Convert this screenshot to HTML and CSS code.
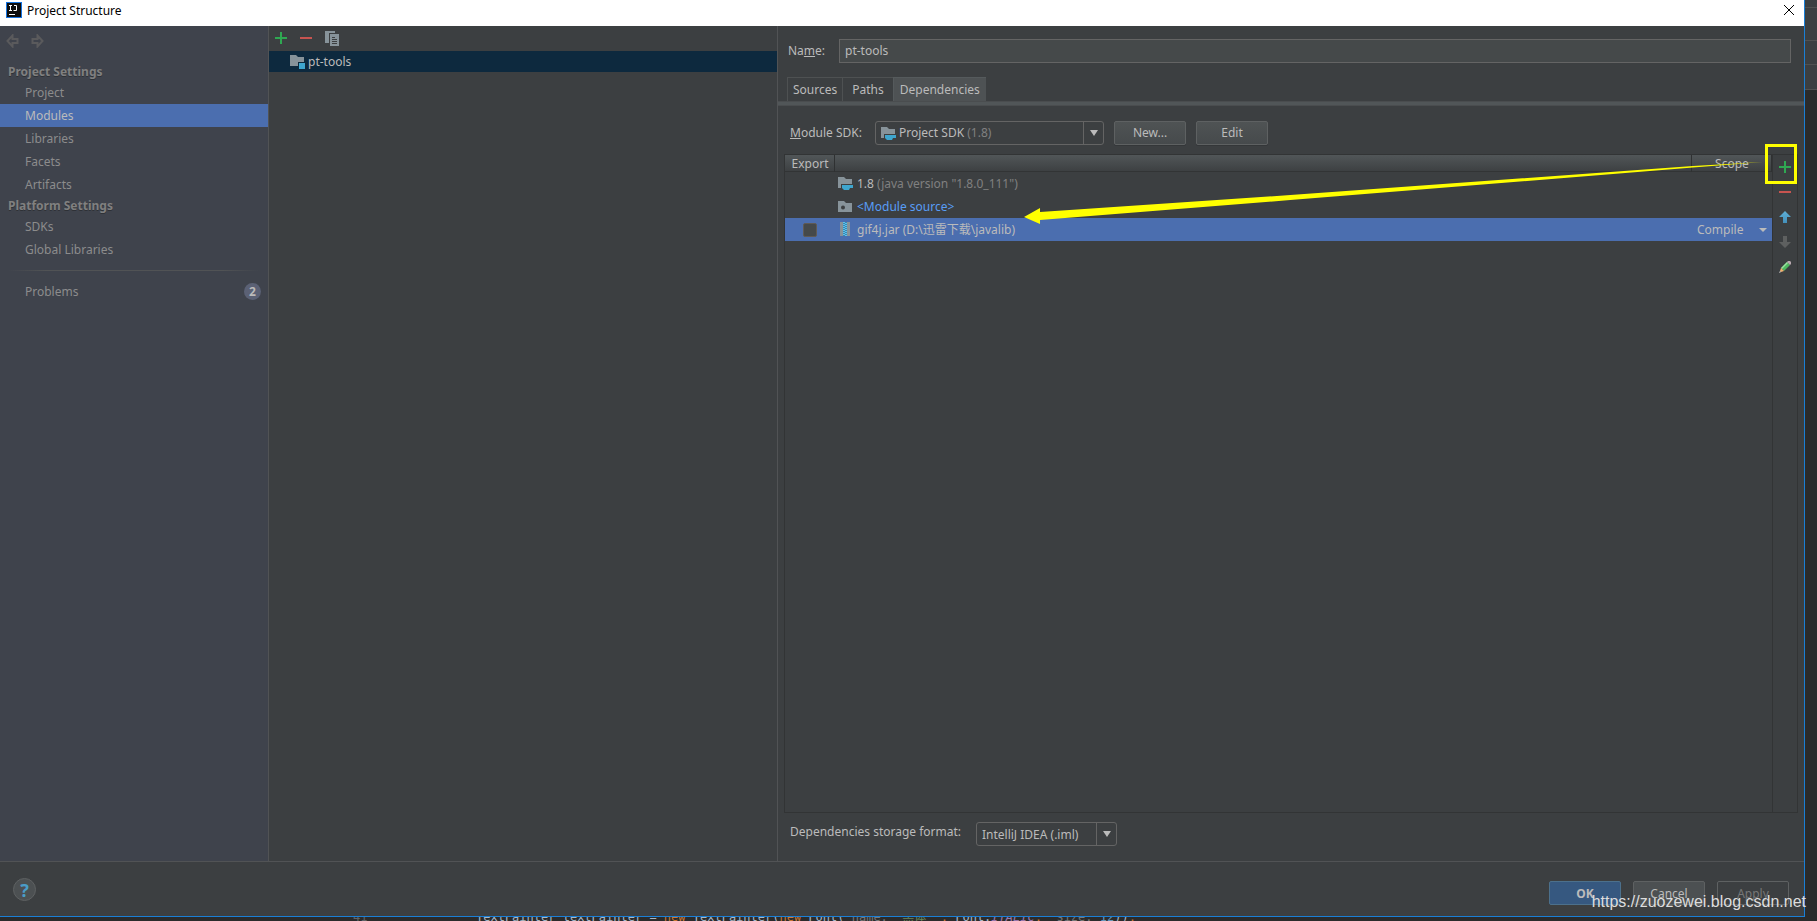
FILE: index.html
```html
<!DOCTYPE html>
<html lang="en">
<head>
<meta charset="utf-8">
<title>Project Structure</title>
<link rel="stylesheet" href="styles.css">
</head>
<body>
<svg class="defs" aria-hidden="true">
  <defs>
    <linearGradient id="blue" x1="0" y1="0" x2="0" y2="1"><stop offset="0" stop-color="#5fb0d6"/><stop offset="1" stop-color="#4390bb"/></linearGradient>
    <symbol id="plus" viewBox="0 0 12 12"><path fill="#2fa852" d="M5 0h2v5h5v2H7v5H5V7H0V5h5z"/></symbol>
    <symbol id="minus" viewBox="0 0 12 12"><path fill="#c75450" d="M0 5h12v2H0z"/></symbol>
    <symbol id="sdk" viewBox="0 0 15 15"><path fill="#87939a" d="M0 1h6l2 2h6v5H3v4H0z"/><path fill="#3ea6cf" d="M4 9h11v3h-3l-1 2H6l-2-2z"/></symbol>
  </defs>
</svg>
<div class="screen">
  <div class="upper">
    <main class="dialog">
      <header class="title">
        <svg class="logo" viewBox="0 0 16 16"><path fill="#1673e0" d="M0 0h16v16H0z"/><path fill="#0c0c0c" d="M1 1h14v14H1z"/><path fill="none" stroke="#fff" d="M3 3.5h3M4.500 3v5M3 8.500h3M8 3.500h2.500V8.500H7.500M3 12.500h6"/></svg>
        <h1>Project Structure</h1>
        <button class="close" aria-label="Close"><svg viewBox="0 0 10 10"><path d="M0 0l10 10M10 0L0 10" stroke="#000" fill="none"/></svg></button>
      </header>
      <div class="content">
        <nav class="side">
          <div class="history">
            <button aria-label="Back"><svg viewBox="0 0 13 14"><path d="M1.500 7L6.500 1.500v3.500h5v4h-5v3.500z" fill="none" stroke="#5a5a5c" stroke-width="2"/></svg></button>
            <button aria-label="Forward"><svg viewBox="0 0 13 14"><path d="M11.500 7L6.500 1.500v3.500h-5v4h5v3.500z" fill="none" stroke="#5a5a5c" stroke-width="2"/></svg></button>
          </div>
          <h2>Project Settings</h2>
          <a href="#">Project</a>
          <a href="#" class="current">Modules</a>
          <a href="#">Libraries</a>
          <a href="#">Facets</a>
          <a href="#">Artifacts</a>
          <h2>Platform Settings</h2>
          <a href="#">SDKs</a>
          <a href="#">Global Libraries</a>
          <hr>
          <a href="#">Problems<span class="badge">2</span></a>
        </nav>
        <section class="modules">
          <div class="tools">
            <button aria-label="Add module"><svg class="i12"><use href="#plus"/></svg></button>
            <button aria-label="Remove module"><svg class="i12"><use href="#minus"/></svg></button>
            <button aria-label="Copy module"><svg class="copy" viewBox="0 0 14 15"><path fill="#87939a" d="M0 0h10v2H4v10H0z"/><path fill="#87939a" d="M5 3h9v12H5z"/><path stroke="#3c3f41" d="M7 6.500h3M7 8.500h5M7 10.500h5M7 12.500h5"/></svg></button>
          </div>
          <div class="module">
            <svg class="modicon" viewBox="0 0 15 14"><path fill="#87939a" d="M0 0h6l2 2h6v5H8v4H0z"/><path fill="#3ea6cf" d="M9 8h6v6H9z"/></svg>
            <span>pt-tools</span>
          </div>
        </section>
        <section class="detail">
          <div class="name"><label for="name">Na<u>m</u>e:</label><input id="name" type="text" value="pt-tools"></div>
          <div class="tabs" role="tablist">
            <button role="tab">Sources</button><button role="tab" class="wide">Paths</button><button role="tab" class="active" aria-selected="true">Dependencies</button>
          </div>
          <div class="tabline"></div>
          <div class="sdkrow">
            <label for="sdk"><u>M</u>odule SDK:</label>
            <div class="combo sdkcombo">
              <svg class="sdkicon"><use href="#sdk"/></svg>
              <button id="sdk" class="value" aria-haspopup="listbox">Project SDK <span class="dim">(1.8)</span></button>
              <span class="arrow"></span>
            </div>
            <button class="btn">New...</button>
            <button class="btn">Edit</button>
          </div>
          <div class="deps">
            <table>
              <colgroup><col class="c1"><col><col class="c3"></colgroup>
              <thead><tr><th>Export</th><th></th><th>Scope</th></tr></thead>
              <tbody>
                <tr><td></td><td><div class="cell"><svg class="sdkicon"><use href="#sdk"/></svg><span>1.8 <span class="dim">(java version "1.8.0_111")</span></span></div></td><td></td></tr>
                <tr><td></td><td><div class="cell"><svg class="sdkicon" viewBox="0 0 15 15"><path fill="#87939a" d="M0 2h6l2 2h6v9H0z"/><circle cx="5" cy="8.500" r="2" fill="#3c3f41"/></svg><span class="src">&lt;Module source&gt;</span></div></td><td></td></tr>
                <tr class="sel"><td><input type="checkbox" aria-label="Export gif4j.jar"></td><td><div class="cell"><svg class="sdkicon" viewBox="0 0 15 15"><path fill="#87939a" d="M2 0h3v14H2zM9 0h3v14H9z"/><path fill="#3a87b5" d="M5 0h4v14H5z"/><path stroke="#5cc3ea" stroke-width="2" stroke-dasharray="1 1" d="M6 0v14"/><path stroke="#5cc3ea" stroke-width="2" stroke-dasharray="1 1" d="M8 1v13"/></svg><span>gif4j.jar (D:\迅雷下载\javalib)</span></div></td><td><button class="compile">Compile<i></i></button></td></tr>
              </tbody>
            </table>
            <div class="actions">
              <button aria-label="Add"><svg class="i12"><use href="#plus"/></svg></button>
              <button aria-label="Remove"><svg class="i12"><use href="#minus"/></svg></button>
              <button aria-label="Up"><svg class="i12" viewBox="0 0 12 12"><path fill="url(#blue)" d="M6 0l6 6H8v6H4V6H0z"/></svg></button>
              <button aria-label="Down"><svg class="i12" viewBox="0 0 12 12"><path fill="#5e6060" d="M6 12l6-6H8V0H4v6H0z"/></svg></button>
              <button aria-label="Edit"><svg class="i12" viewBox="0 0 12 12"><path fill="#4fb860" d="M8 1l3 3-6 6-3-3z"/><path fill="#9ce0a0" d="M8 1l1 1-6 6-1-1z"/><path fill="#b9a9b0" d="M8 1l1-1h2l1 1v2l-1 1z"/><path fill="#f0b070" d="M2 7l3 3-3 1-1-1z"/><path fill="#ddd" d="M1 10l1 1-2 1z"/></svg></button>
              <div class="mark"></div>
            </div>
            <svg class="pointer" viewBox="0 0 738 65" preserveAspectRatio="none"><path fill="#ff0" d="M0 57L16 48v4L266 35L668 6L738 2L668 7.500L266 40L16 60v4z"/></svg>
          </div>
          <div class="storage">
            <label for="format">Dependencies storage format:</label>
            <div class="combo fmt"><select id="format"><option>IntelliJ IDEA (.iml)</option></select><span class="arrow"></span></div>
          </div>
        </section>
      </div>
      <footer class="foot">
        <button class="help" aria-label="Help">?</button>
        <button class="fbtn ok">OK</button>
        <button class="fbtn">Cancel</button>
        <button class="fbtn off" disabled>Apply</button>
      </footer>
      <div class="watermark">https://zuozewei.blog.csdn.net</div>
    </main>
    <div class="edge"><i></i><i></i><i></i><i></i></div>
  </div>
  <div class="code"><span class="ln">41</span><pre>TextPainter textPainter = <b>new</b> TextPainter(<b>new</b> Font( <em>name:</em> <s>"黑体"</s> <b>,</b> Font.<q>ITALIC</q><b>,</b>  <em>size:</em> <var>12</var>))<b>;</b></pre></div>
</div>
</body>
</html>
```
FILE: styles.css
```css
* { box-sizing: border-box; }
body { margin: 0; background: #2b2b2b; color: #bbb; font: 12px/16px "Noto Sans", "Noto Sans CJK SC", sans-serif; }
button, input, select { font: inherit; color: inherit; margin: 0; padding: 0; border: 0; background: none; }
svg { display: block; flex: none; }
.defs { position: absolute; width: 0; height: 0; }
.i12 { width: 12px; height: 12px; }
.dim { color: #808080; }

.screen { display: flex; flex-direction: column; height: 100vh; overflow: hidden; }
.upper { flex: 1; display: flex; min-height: 0; }
.dialog { flex: 1; min-width: 0; display: flex; flex-direction: column; background: #3c3f41; border: solid #1a7fd6; border-width: 0 1px 1px 0; position: relative; }

.title { display: flex; align-items: flex-start; height: 26px; padding: 2px 10px 0 6px; gap: 5px; background: #fff; color: #000; }
.title h1 { flex: 1; margin: 0; font-size: 12px; line-height: 18px; font-weight: 400; }
.logo { width: 16px; height: 16px; }
.close { padding-top: 3px; }
.close svg { width: 10px; height: 10px; }

.content { flex: 1; display: flex; min-height: 0; border-bottom: 1px solid #515355; }
.side { width: 269px; background: #3f434c; border-right: 1px solid #515355; color: #8c8c8c; }
.history { display: flex; align-items: flex-start; gap: 12px; height: 36px; padding: 8px 6px; }
.history svg { width: 13px; height: 14px; }
.side h2 { margin: 0; padding-left: 8px; font-size: 12px; line-height: 19px; color: #808080; text-shadow: 0 1px #2e3136; }
.side a { display: flex; justify-content: space-between; align-items: center; height: 23px; padding: 0 7px 0 25px; color: inherit; text-decoration: none; }
.side .current { background: #4b6eaf; color: #bbb; }
.side hr { margin: 9px 8px; border: 0; height: 1px; background: linear-gradient(90deg, transparent, #515355 15%, #515355 85%, transparent); }
.badge { width: 17px; height: 17px; border-radius: 50%; background: #5b6175; color: #bbb; font-weight: 700; line-height: 17px; text-align: center; }

.modules { width: 509px; border-right: 1px solid #515355; }
.tools { display: flex; align-items: center; gap: 13px; height: 25px; padding: 0 0 1px 6px; }
.copy { width: 14px; height: 15px; }
.module { display: flex; align-items: center; gap: 3px; height: 21px; padding-left: 21px; background: #0d293e; }
.modicon { width: 15px; height: 14px; }

.detail { flex: 1; min-width: 0; display: flex; flex-direction: column; }
.name { display: flex; align-items: center; padding: 13px 13px 0 10px; }
.name label { width: 51px; }
.name input { flex: 1; height: 24px; padding: 0 5px 1px; background: #45494a; border: 1px solid #646464; }
.tabs { display: flex; height: 24px; margin: 14px 0 0 9px; }
.tabs button { padding: 1px 5px 0; border: solid #4e5152; border-width: 1px 0 0 1px; }
.tabs .wide { padding: 1px 9px 0; }
.tabs .active { padding: 1px 6px 0; background: #4e5254; border-color: #555a5c; }
.tabline { height: 5px; background: #515658; border: solid #4a4d4f; border-width: 1px 0; }
.sdkrow { display: flex; align-items: center; padding: 15px 10px 9px 12px; }
.sdkrow label { width: 85px; }
.combo { display: flex; align-items: center; height: 24px; border: 1px solid #646464; border-radius: 3px; }
.combo .arrow { align-self: stretch; width: 20px; border-left: 1px solid #646464; display: grid; place-items: center; pointer-events: none; }
.combo .arrow::after { content: ""; border: solid transparent; border-width: 6px 4px 0; border-top-color: #bbb; }
.sdkcombo { width: 229px; padding-left: 5px; }
.sdkicon { width: 15px; height: 15px; }
.value { flex: 1; padding-left: 3px; text-align: left; }
.btn { width: 72px; height: 24px; margin-left: 10px; background: linear-gradient(#4f5354, #464a4c); border: 1px solid #5e6162; border-radius: 2px; box-shadow: 0 1px #343739; }

.deps { flex: 1; display: flex; align-items: flex-start; margin: 0 6px; border: 1px solid #323435; position: relative; }
table { flex: 1; min-width: 0; table-layout: fixed; border-collapse: collapse; }
.c1 { width: 50px; }
.c3 { width: 80px; }
th { height: 17px; padding: 0; line-height: 17px; font-weight: 400; background: linear-gradient(#515658, #3c3f41); box-shadow: inset -1px 0 #2f3132, inset 0 -1px #323435; }
td { height: 23px; padding: 0; line-height: 16px; }
.cell { display: flex; align-items: center; gap: 4px; padding-left: 3px; }
.src { color: #589df6; }
.sel { background: #4b6eaf; }
td input { appearance: none; display: block; width: 14px; height: 14px; margin-left: 18px; background: #45494a; border: 1px solid #5f5a55; border-radius: 2px; }
.compile { display: flex; align-items: center; justify-content: space-between; width: 100%; padding: 0 5px; }
.compile i { border: solid transparent; border-width: 4px 4px 0; border-top-color: #bbb; }
.actions { align-self: stretch; width: 25px; border-left: 1px solid #323435; display: flex; flex-direction: column; align-items: center; gap: 13px; padding-top: 6px; position: relative; }
.mark { position: absolute; left: -8px; top: -11px; width: 32px; height: 40px; border: 3px solid #ff0; }
.pointer { position: absolute; left: 239px; top: 5px; width: calc(100% - 273px); height: 65px; pointer-events: none; }
.storage { display: flex; align-items: center; padding: 9px 0 15px 12px; }
.storage label { width: 186px; padding-bottom: 4px; }
.fmt { width: 141px; }
.fmt select { appearance: none; flex: 1; min-width: 0; height: 22px; padding: 1px 0 0 5px; }

.foot { display: flex; align-items: flex-start; gap: 12px; height: 54px; padding: 19px 15px 0 13px; }
.help { width: 23px; height: 23px; margin: -3px auto 0 0; border: 1px solid #5e6162; border-radius: 50%; background: #4c5052; color: #4a9cc7; font-size: 18px; font-weight: 700; line-height: 20px; }
.fbtn { width: 72px; height: 24px; padding-top: 1px; background: #4c5052; border: 1px solid #5e6162; border-radius: 2px; }
.ok { background: #365880; border-color: #4c708c; font-weight: 700; }
.off { background: none; color: #777; }
.watermark { position: absolute; right: -2px; bottom: 4px; font: 16px/20px "Liberation Sans", sans-serif; color: #ddd; }

.edge { width: 12px; }
.edge i { display: block; height: 24px; background: #3c3f41; border-bottom: 1px solid #515151; }
.edge i:first-child { height: 8px; }
.edge i:nth-child(2) { height: 33px; }
.edge i:last-child { height: 25px; }
.code { display: flex; align-items: flex-end; height: 4px; overflow: hidden; font: 12px/8px "DejaVu Sans Mono", "Noto Sans CJK SC", monospace; color: #a9b7c6; }
.ln { width: 476px; padding-left: 353px; color: #606366; }
.code pre { margin: 0; height: 8px; font: inherit; }
.code b { font-weight: 400; color: #cc7832; }
.code s { text-decoration: none; color: #6a8759; }
.code em { font-style: normal; color: #787878; }
.code q { quotes: none; font-style: italic; color: #9876aa; }
.code var { font-style: normal; color: #6897bb; }
```
